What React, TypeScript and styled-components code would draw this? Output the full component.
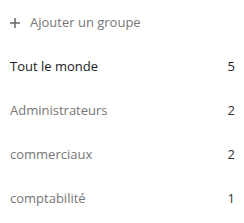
import React from "react"
import styled, { createGlobalStyle } from "styled-components"

const GlobalStyle = createGlobalStyle`
  html, body {
    margin: 0;
    padding: 0;
    background: #fff;
  }
  body {
    font-family: "Open Sans", "Noto Sans", sans-serif;
    font-size: 13px;
  }
`

type Group = { name: string; count: number; main?: boolean }

const groups: Group[] = [
  { name: "Tout le monde", count: 5, main: true },
  { name: "Administrateurs", count: 2 },
  { name: "commerciaux", count: 2 },
  { name: "comptabilité", count: 1 },
]

const Navigation = styled.ul`
  list-style: none;
  margin: 0;
  padding: 0;
  width: 244px;
`

const AddEntry = styled.li`
  display: flex;
  align-items: center;
  gap: 10px;
  height: 44px;
  padding-left: 10px;
  color: #767676;
  line-height: 44px;
`

const PlusIcon = styled.svg`
  width: 10px;
  height: 10px;
  flex-shrink: 0;
  margin-top: 1px;
`

const Entry = styled.li<{ $main?: boolean }>`
  display: flex;
  align-items: center;
  justify-content: space-between;
  height: 44px;
  line-height: 44px;
  padding: 0 9px 0 10px;
  color: ${(p) => (p.$main ? "#222" : "#767676")};
`

const Counter = styled.span<{ $main?: boolean }>`
  color: ${(p) => (p.$main ? "#222" : "#333")};
`

export default function App() {
  return (
    <>
      <GlobalStyle />
      <Navigation>
        <AddEntry>
          <PlusIcon viewBox="0 0 10 10">
            <path d="M5 0v10M0 5h10" stroke="#666" strokeWidth="1.5" fill="none" />
          </PlusIcon>
          Ajouter un groupe
        </AddEntry>
        {groups.map((g) => (
          <Entry key={g.name} $main={g.main}>
            <span>{g.name}</span>
            <Counter $main={g.main}>{g.count}</Counter>
          </Entry>
        ))}
      </Navigation>
    </>
  )
}
